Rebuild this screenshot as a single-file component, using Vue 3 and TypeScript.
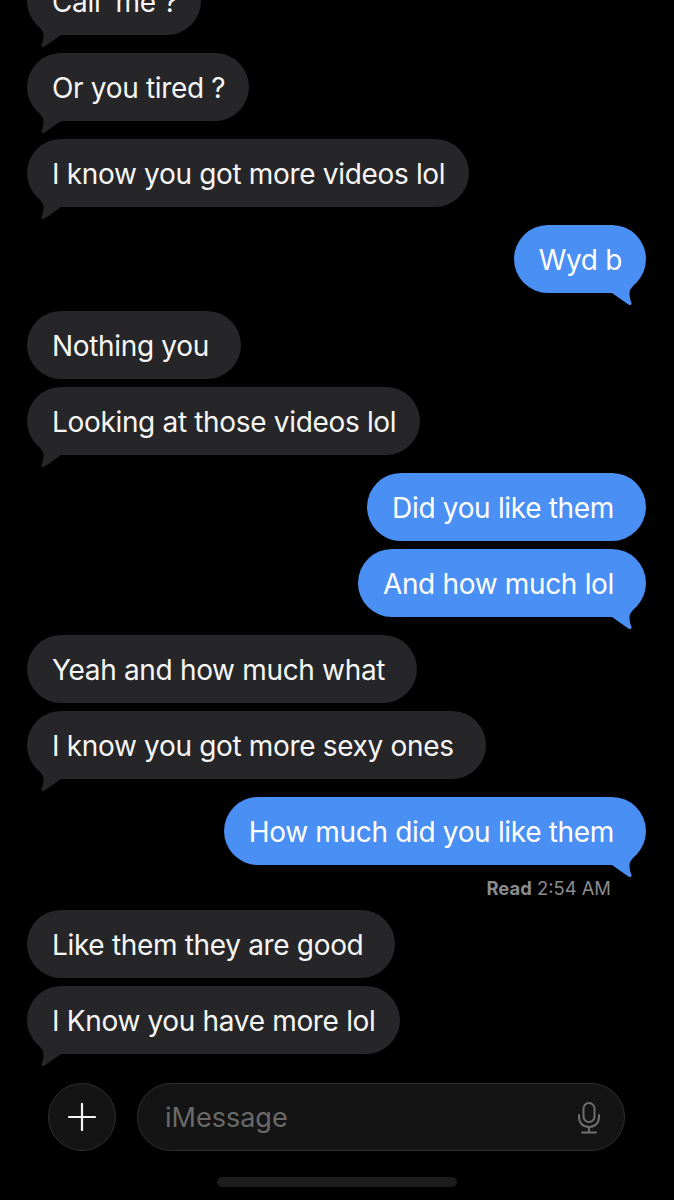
<script setup lang="ts">
interface Message {
	text: string
	mine: boolean
	tail: boolean
	loose?: boolean
}

const messages: Message[] = [
	{ text: 'Call  me ?', mine: false, tail: true },
	{ text: 'Or you tired ?', mine: false, tail: true },
	{ text: 'I know you got more videos lol', mine: false, tail: true },
	{ text: 'Wyd b', mine: true, tail: true },
	{ text: 'Nothing you', mine: false, tail: false, loose: true },
	{ text: 'Looking at those videos lol', mine: false, tail: true },
	{ text: 'Did you like them', mine: true, tail: false, loose: true },
	{ text: 'And how much lol', mine: true, tail: true, loose: true },
	{ text: 'Yeah and how much what', mine: false, tail: false, loose: true },
	{ text: 'I know you got more sexy ones', mine: false, tail: true, loose: true },
	{ text: 'How much did you like them', mine: true, tail: true, loose: true }
]

const lastMessages: Message[] = [
	{ text: 'Like them they are good', mine: false, tail: false, loose: true },
	{ text: 'I Know you have more lol', mine: false, tail: true }
]
</script>

<template>
	<div class="screen">
		<div class="thread">
			<div
				v-for="msg in messages"
				:key="msg.text"
				class="bubble"
				:class="{ mine: msg.mine, 'has-tail': msg.tail, loose: msg.loose }"
			>
				<span>{{ msg.text }}</span>
				<svg v-if="msg.tail" class="tail" width="40" height="26" viewBox="0 0 40 26">
					<path d="M6 12 L22 23.2 Q25.8 25.4 25.6 22 Q22.4 15 24 9 Q27 4 32 0 L6 0 Z" />
				</svg>
			</div>

			<div class="read"><b>Read</b> 2:54 AM</div>

			<div
				v-for="msg in lastMessages"
				:key="msg.text"
				class="bubble"
				:class="{ mine: msg.mine, 'has-tail': msg.tail, loose: msg.loose }"
			>
				<span>{{ msg.text }}</span>
				<svg v-if="msg.tail" class="tail" width="40" height="26" viewBox="0 0 40 26">
					<path d="M6 12 L22 23.2 Q25.8 25.4 25.6 22 Q22.4 15 24 9 Q27 4 32 0 L6 0 Z" />
				</svg>
			</div>
		</div>

		<div class="composer">
			<div class="plus">
				<svg width="28" height="28" viewBox="0 0 28 28">
					<path d="M1 14 H27 M14 1 V27" stroke="#f4f4f4" stroke-width="2.2" stroke-linecap="round" fill="none" />
				</svg>
			</div>
			<div class="field">
				<span>iMessage</span>
				<svg width="22" height="32" viewBox="0 0 22 32" fill="none" stroke="#6f6f6f" stroke-width="2" stroke-linecap="round">
					<rect x="5.5" y="1" width="11" height="19" rx="5.5" />
					<path d="M1 13 V15 C1 21 5 25 11 25 C17 25 21 21 21 15 V13" />
					<path d="M11 25 V30.5 M4 30.5 H18" />
				</svg>
			</div>
		</div>

		<div class="home-bar"></div>
	</div>
</template>

<style scoped>
.screen {
	display: flex;
	flex-direction: column;
	height: 1200px;
	overflow: hidden;
	background: #000;
	font-family: Inter, "Liberation Sans", sans-serif;
}

.thread {
	display: flex;
	flex-direction: column;
	align-items: flex-start;
	margin-top: -33px;
	padding: 0 28px 0 27px;
}

.bubble {
	position: relative;
	box-sizing: border-box;
	height: 68px;
	margin-bottom: 8px;
	padding: 1px 24px 0 25px;
	display: flex;
	align-items: center;
	border-radius: 34px;
	background: #262628;
	color: #f6f6f6;
	font-size: 28px;
	letter-spacing: -0.33px;
	white-space: pre;
}

.bubble.has-tail {
	margin-bottom: 18px;
}

.bubble.loose {
	padding-right: 32px;
}

.bubble.mine {
	align-self: flex-end;
	background: #4a8ff3;
	color: #fff;
}

.tail {
	position: absolute;
	left: 0;
	bottom: -14px;
	transform: scaleX(-1);
	fill: #262628;
}

.mine .tail {
	left: auto;
	right: 0;
	transform: none;
	fill: #4a8ff3;
}

.read {
	align-self: flex-end;
	height: 27px;
	margin: -8px 35px 8px 0;
	color: #8b8b8d;
	font-size: 18.4px;
	line-height: 27px;
}

.composer {
	display: flex;
	align-items: center;
	gap: 21px;
	margin: 11px 49px 0 48px;
}

.plus {
	flex: none;
	box-sizing: border-box;
	width: 68px;
	height: 68px;
	display: flex;
	align-items: center;
	justify-content: center;
	border: 1.5px solid #2f2f2f;
	border-radius: 50%;
	background: #141414;
}

.field {
	flex: 1;
	box-sizing: border-box;
	height: 68px;
	display: flex;
	align-items: center;
	justify-content: space-between;
	padding: 1px 24px 0 27px;
	border: 1.5px solid #2f2f2f;
	border-radius: 34px;
	background: #141414;
	color: #6a6a6a;
	font-size: 27px;
}

.home-bar {
	align-self: center;
	width: 240px;
	height: 10px;
	margin-top: 26px;
	border-radius: 5px;
	background: #1c1c1c;
}
</style>

<style>
html,
body {
	background: #000;
}
</style>
